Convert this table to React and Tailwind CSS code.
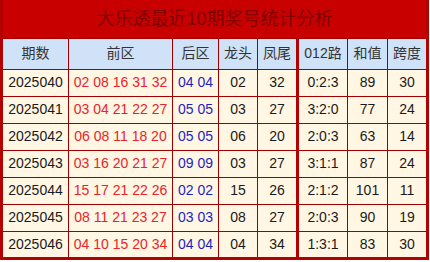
import React from "react";

const rows = [
  ["2025040", "02 08 16 31 32", "04 04", "02", "32", "0:2:3", "89", "30"],
  ["2025041", "03 04 21 22 27", "05 05", "03", "27", "3:2:0", "77", "24"],
  ["2025042", "06 08 11 18 20", "05 05", "06", "20", "2:0:3", "63", "14"],
  ["2025043", "03 16 20 21 27", "09 09", "03", "27", "3:1:1", "87", "24"],
  ["2025044", "15 17 21 22 26", "02 02", "15", "26", "2:1:2", "101", "11"],
  ["2025045", "08 11 21 23 27", "03 03", "08", "27", "2:0:3", "90", "19"],
  ["2025046", "04 10 15 20 34", "04 04", "04", "34", "1:3:1", "83", "30"],
];

const headers = ["期数", "前区", "后区", "龙头", "凤尾", "012路", "和值", "跨度"];

const cell = "border border-[#a00000] p-0 text-center";

export default function App() {
  return (
    <div className="w-[430px] h-[262px] bg-white font-['Liberation_Sans','Noto_Sans_CJK_SC',sans-serif]">
      <table className="table-fixed border-collapse w-[429px] border-[3px] border-t-0 border-[#b30000] text-[14px] text-[#1a1a1a]">
        <colgroup>
          <col className="w-[67px]" />
          <col className="w-[104px]" />
          <col className="w-[46px]" />
          <col className="w-[39px]" />
          <col className="w-[40px]" />
          <col className="w-[50px]" />
          <col className="w-[40px]" />
          <col className="w-[40px]" />
        </colgroup>
        <thead>
          <tr className="h-[38px] bg-[#c80000]">
            <th colSpan={8} className="p-0 pt-0.5 text-[18px] font-normal text-[#800000]">
              大乐透最近10期奖号统计分析
            </th>
          </tr>
          <tr className="h-[31px] bg-[#cfe2f8]">
            {headers.map((h, i) => (
              <th
                key={h}
                className={`${cell} font-normal text-[14px] text-[#333] ${i === 5 ? "border-l-[3px] border-l-[#b30000]" : ""}`}
              >
                {h}
              </th>
            ))}
          </tr>
        </thead>
        <tbody className="bg-[#fff6e3]">
          {rows.map((r) => (
            <tr key={r[0]} className="h-[27px]">
              <td className={cell}>{r[0]}</td>
              <td className={`${cell} text-[#e8242a]`}>{r[1]}</td>
              <td className={`${cell} text-[#1f1fc4]`}>{r[2]}</td>
              <td className={cell}>{r[3]}</td>
              <td className={cell}>{r[4]}</td>
              <td className={`${cell} border-l-[3px] border-l-[#b30000]`}>{r[5]}</td>
              <td className={cell}>{r[6]}</td>
              <td className={cell}>{r[7]}</td>
            </tr>
          ))}
        </tbody>
      </table>
    </div>
  );
}
